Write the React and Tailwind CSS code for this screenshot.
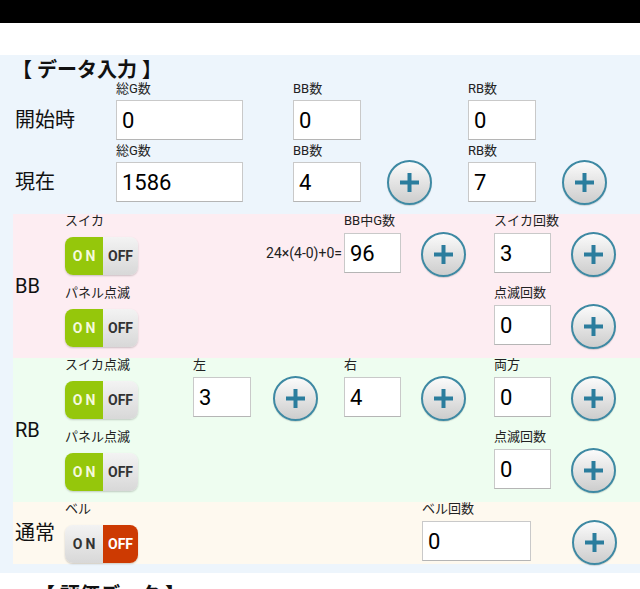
import React from 'react';

// ──────────────────────────────────────────────────────────────
// 小物
// ──────────────────────────────────────────────────────────────

const PlusButton = () => (
    <button
        type="button"
        className="w-[45px] h-[45px] rounded-full border-2 border-[#3e89a3] bg-linear-to-b from-[#fbfbfb] to-[#cdcdcd] flex items-center justify-center shadow-[0_1px_1px_rgba(0,0,0,0.15)]"
    >
        <svg width="19" height="19" viewBox="0 0 19 19">
            <rect x="7.5" y="0" width="4" height="19" fill="#2b7d9d" />
            <rect x="0" y="7.5" width="19" height="4" fill="#2b7d9d" />
        </svg>
    </button>
);

const NumInput = ({ value, w }) => (
    <input
        type="text"
        readOnly
        defaultValue={value}
        className={`${w} h-[40px] bg-white border border-[#c9c9c9] border-b-[#b5b5b5] pl-[5px] text-[22px] text-black outline-none`}
    />
);

const Field = ({ label, value, cell, w }) => (
    <div className={`${cell} flex flex-col`}>
        <div className="h-[14px] leading-[14px] text-[13px] text-[#222] whitespace-nowrap">{label}</div>
        <div className="mt-[5px]">
            <NumInput value={value} w={w} />
        </div>
    </div>
);

const PlusCell = ({ cell }) => (
    <div className={`${cell} pt-[18px]`}>
        <PlusButton />
    </div>
);

const Toggle = ({ label, on }) => (
    <div className="w-[128px] flex flex-col">
        <div className="h-[14px] leading-[14px] text-[13px] text-[#222] whitespace-nowrap">{label}</div>
        <div className="mt-[9px] w-[73px] h-[38px] rounded-[8px] overflow-hidden flex shadow-[0_1px_2px_rgba(0,0,0,0.2)] font-bold text-[14px]">
            {on ? (
                <>
                    <div className="w-[38px] bg-[#95c70b] text-[#f4f9dc] flex items-center justify-center tracking-[3px] pl-[3px]">ON</div>
                    <div className="w-[35px] bg-linear-to-b from-[#f3f3f3] to-[#d8d8d8] text-[#333] flex items-center justify-center">OFF</div>
                </>
            ) : (
                <>
                    <div className="w-[38px] bg-linear-to-b from-[#f3f3f3] to-[#d8d8d8] text-[#333] flex items-center justify-center tracking-[3px] pl-[3px]">ON</div>
                    <div className="w-[35px] bg-[#cd3a02] text-white flex items-center justify-center">OFF</div>
                </>
            )}
        </div>
    </div>
);

const Section = ({ title, bg, children }) => (
    <div className={`ml-[13px] flex ${bg}`}>
        <div className="w-[52px] pl-[2px] flex items-center text-[20px] text-[#111]">{title}</div>
        <div className="flex flex-col">{children}</div>
    </div>
);

const TopField = ({ label, value, cell, w }) => (
    <div className={`${cell} flex flex-col`}>
        <div className="h-[14px] leading-[14px] text-[13px] text-[#222]">{label}</div>
        <div className="mt-[4px]">
            <NumInput value={value} w={w} />
        </div>
    </div>
);

const TopRow = ({ title, g, bb, rb, plus }) => (
    <div className="flex items-end">
        <div className="w-[116px] pl-[15px] h-[40px] flex items-center text-[20px] text-[#111]">{title}</div>
        <TopField label="総G数" value={g} cell="w-[177px]" w="w-[127px]" />
        <TopField label="BB数" value={bb} cell="w-[94px]" w="w-[68px]" />
        <div className="w-[81px] mb-[-3px]">{plus && <PlusButton />}</div>
        <TopField label="RB数" value={rb} cell="w-[94px]" w="w-[68px]" />
        <div className="mb-[-3px]">{plus && <PlusButton />}</div>
    </div>
);

// ──────────────────────────────────────────────────────────────
// 本体
// ──────────────────────────────────────────────────────────────

export default function App() {
    return (
        <div className="w-[640px] h-[589px] overflow-hidden bg-white font-[family-name:Roboto,'Noto_Sans_CJK_JP',sans-serif]">
            <div className="h-[23px] bg-black" />
            <div className="h-[32px] bg-white" />

            <div className="bg-[#edf5fc] pt-[4px] pb-[9px]">
                <div className="pl-[12px] h-[22px] leading-[22px] text-[20px] font-bold text-[#111]">【 データ入力 】</div>

                <div className="mt-[1px]">
                    <TopRow title="開始時" g="0" bb="0" rb="0" />
                </div>
                <div className="mt-[4px]">
                    <TopRow title="現在" g="1586" bb="4" rb="7" plus />
                </div>

                <div className="mt-[12px]">
                    <Section title="BB" bg="bg-[#fdedf2]">
                        <div className="h-[72px] flex items-start">
                            <Toggle label="スイカ" on />
                            <div className="w-[151px] flex flex-col">
                                <div className="h-[14px]" />
                                <div className="mt-[5px] h-[40px] flex items-center justify-end pr-[2px] text-[14px] text-[#222] whitespace-nowrap">24×(4-0)+0=</div>
                            </div>
                            <Field label="BB中G数" value="96" cell="w-[77px]" w="w-[57px]" />
                            <PlusCell cell="w-[73px]" />
                            <Field label="スイカ回数" value="3" cell="w-[77px]" w="w-[57px]" />
                            <PlusCell cell="w-[50px]" />
                        </div>
                        <div className="h-[72px] flex items-start">
                            <Toggle label="パネル点滅" on />
                            <div className="w-[301px]" />
                            <Field label="点滅回数" value="0" cell="w-[77px]" w="w-[57px]" />
                            <PlusCell cell="w-[50px]" />
                        </div>
                    </Section>

                    <Section title="RB" bg="bg-[#eefdf0]">
                        <div className="h-[72px] flex items-start">
                            <Toggle label="スイカ点滅" on />
                            <Field label="左" value="3" cell="w-[80px]" w="w-[58px]" />
                            <PlusCell cell="w-[71px]" />
                            <Field label="右" value="4" cell="w-[77px]" w="w-[57px]" />
                            <PlusCell cell="w-[73px]" />
                            <Field label="両方" value="0" cell="w-[77px]" w="w-[57px]" />
                            <PlusCell cell="w-[50px]" />
                        </div>
                        <div className="h-[72px] flex items-start">
                            <Toggle label="パネル点滅" on />
                            <div className="w-[301px]" />
                            <Field label="点滅回数" value="0" cell="w-[77px]" w="w-[57px]" />
                            <PlusCell cell="w-[50px]" />
                        </div>
                    </Section>

                    <Section title="通常" bg="bg-[#fef9ef]">
                        <div className="h-[62px] flex items-start">
                            <Toggle label="ベル" on={false} />
                            <div className="w-[229px]" />
                            <Field label="ベル回数" value="0" cell="w-[150px]" w="w-[109px]" />
                            <PlusCell cell="w-[50px]" />
                        </div>
                    </Section>
                </div>
            </div>

            <div className="pl-[35px] pt-[11px] h-[22px] leading-[22px] text-[20px] font-bold text-[#111] whitespace-nowrap">【 評価データ 】</div>
        </div>
    );
}
